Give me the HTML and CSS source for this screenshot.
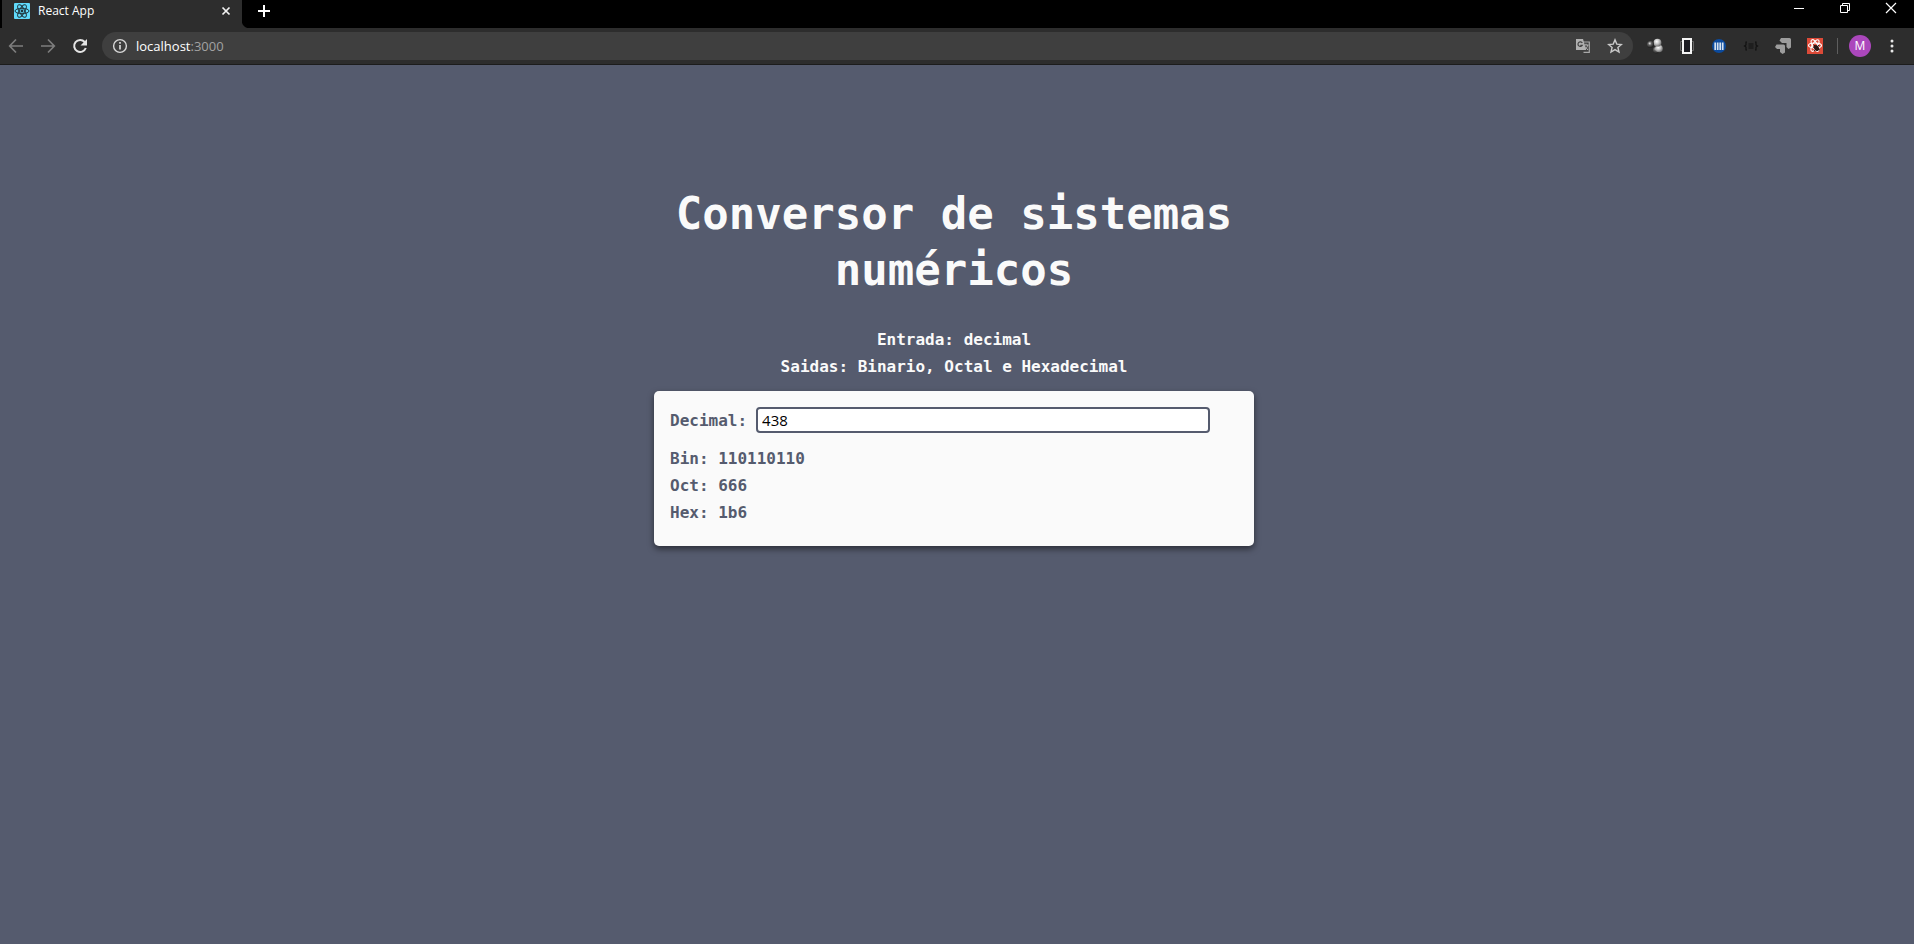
FILE: index.html
```html
<!DOCTYPE html>
<html lang="pt-BR">
<head>
<meta charset="utf-8">
<title>React App</title>
<link rel="stylesheet" href="styles.css">
</head>
<body>
<header class="browser">
  <div class="tabstrip">
    <div class="tab">
      <svg class="favicon" width="16" height="16" viewBox="0 0 16 16" fill="none" stroke="#20353d">
        <rect width="16" height="16" rx="1" fill="#61dafb" stroke="none"/>
        <g stroke-width="1"><ellipse cx="8" cy="8" rx="7" ry="2.7"/><ellipse cx="8" cy="8" rx="7" ry="2.7" transform="rotate(60 8 8)"/><ellipse cx="8" cy="8" rx="7" ry="2.7" transform="rotate(120 8 8)"/></g>
        <circle cx="8" cy="8" r="1.4" fill="#20353d" stroke="none"/>
      </svg>
      <span class="tab-title">React App</span>
      <button class="icon-btn" aria-label="Fechar guia"><svg width="16" height="16" viewBox="0 0 16 16" stroke="#f1f1f1" stroke-width="1.7"><path d="M4.500 4.500l7 7M11.500 4.500l-7 7"/></svg></button>
    </div>
    <button class="icon-btn new-tab" aria-label="Nova guia"><svg width="16" height="16" viewBox="0 0 16 16" stroke="#fff" stroke-width="2"><path d="M8 2v12M2 8h12"/></svg></button>
    <div class="window-controls">
      <button class="icon-btn" aria-label="Minimizar"><svg width="16" height="16" viewBox="0 0 16 16" stroke="#fff"><path d="M3 8.500h10"/></svg></button>
      <button class="icon-btn" aria-label="Restaurar"><svg width="16" height="16" viewBox="0 0 16 16" fill="none" stroke="#fff"><path d="M3.500 5.500h7v7h-7zM5.500 5.500v-2h7v7h-2"/></svg></button>
      <button class="icon-btn" aria-label="Fechar"><svg width="16" height="16" viewBox="0 0 16 16" stroke="#fff" stroke-width="1.2"><path d="M3 3l10 10M13 3L3 13"/></svg></button>
    </div>
  </div>
  <div class="toolbar">
    <nav class="nav-buttons">
      <button class="icon-btn" aria-label="Voltar"><svg width="16" height="16" viewBox="0 0 16 16" fill="none" stroke="#7d7d7d" stroke-width="1.7"><path d="M15 8H2M8 1.500L1.700 8L8 14.500"/></svg></button>
      <button class="icon-btn" aria-label="Avançar"><svg width="16" height="16" viewBox="0 0 16 16" fill="none" stroke="#7d7d7d" stroke-width="1.7"><path d="M1 8h13M8 1.500L14.300 8L8 14.500"/></svg></button>
      <button class="icon-btn" aria-label="Recarregar"><svg width="16" height="16" viewBox="0 0 16 16" fill="none" stroke="#e4e4e4" stroke-width="2"><path d="M12.700 4A6 6 0 1 0 13.800 10"/><path d="M15 1v6.500H8.500z" fill="#e4e4e4" stroke="none"/></svg></button>
    </nav>
    <div class="omnibox">
      <svg width="16" height="16" viewBox="0 0 16 16" fill="none" stroke="#d8d8d8"><circle cx="8" cy="8" r="6.400" stroke-width="1.400"/><path d="M8 7v4.500M8 4v1.700" stroke-width="1.700"/></svg>
      <span class="url">localhost<span class="port">:3000</span></span>
      <button class="icon-btn" aria-label="Traduzir"><svg width="16" height="16" viewBox="0 0 16 16" fill="none"><path d="M6 4h8.300v10.300H8.500" stroke="#a8a8a8" stroke-width="1.200"/><path d="M1 1h7l3.200 11H1z" fill="#b0b0b0"/><path d="M7.300 5A2.300 2.300 0 1 0 7.300 7.300H5.300" stroke="#3f3f3f" stroke-width="1.200"/><path d="M8.500 7h5M11 5.700V7M12.800 7c-.4 2-1.500 3.200-3 4.300M10 8.500l3 3.500" stroke="#b0b0b0"/></svg></button>
      <button class="icon-btn" aria-label="Favoritar"><svg width="16" height="16" viewBox="0 0 16 16" fill="none" stroke="#c9c9c9" stroke-width="1.400"><path d="M8 1.900l1.800 4.200 4.600.4-3.500 3 1.100 4.500L8 11.600 4 14l1.100-4.500-3.500-3 4.600-.4z"/></svg></button>
    </div>
    <div class="extensions">
      <button class="icon-btn" aria-label="Moléculas"><svg width="16" height="16" viewBox="0 0 16 16"><defs><radialGradient id="ball" cx=".4" cy=".35" r=".65"><stop offset="0" stop-color="#fff"/><stop offset=".5" stop-color="#c4c4c4"/><stop offset="1" stop-color="#6e6e6e"/></radialGradient><radialGradient id="dark" cx=".4" cy=".35" r=".6"><stop offset="0" stop-color="#eee"/><stop offset=".4" stop-color="#666"/><stop offset="1" stop-color="#222"/></radialGradient></defs><circle cx="9.500" cy="12" r="3.600" fill="url(#dark)"/><circle cx="12" cy="10.500" r="3.800" fill="url(#ball)"/><circle cx="10.500" cy="4.700" r="3.900" fill="url(#ball)"/><circle cx="3.500" cy="6.500" r="3.500" fill="url(#dark)"/></svg></button>
      <button class="icon-btn" aria-label="Dimensões"><svg width="16" height="16" viewBox="0 0 16 16" fill="none"><path d="M4 3.500H1.500v9H4M12 3.500h2.500v9H12" stroke="#666"/><rect x="4" y="1" width="8" height="14" fill="#1c1c22" stroke="#f4f4f4" stroke-width="2"/></svg></button>
      <button class="icon-btn" aria-label="Colunas"><svg width="16" height="16" viewBox="0 0 16 16"><circle cx="8" cy="8" r="7" fill="#0b4a9d"/><path d="M4.200 4.500v7.500M6.700 4.500v7.500M9.200 4.500v7.500M11.700 4.500v7.500" stroke="#d5e2f0" stroke-width="1.700"/></svg></button>
      <button class="icon-btn" aria-label="JSON"><svg width="16" height="16" viewBox="0 0 16 16" fill="none" stroke="#111" stroke-width="1.200"><path d="M4 4H3v3L1.500 8 3 9v3h1M12 4h1v3l1.500 1L13 9v3h-1M5.500 6h5M5.500 8h5M5.500 10h5"/></svg></button>
      <button class="icon-btn" aria-label="Setas"><svg width="16" height="16" viewBox="0 0 16 16" fill="#9c9c9c"><path d="M6 0h8.500Q16 0 16 1.500V9.500l-2.500 1.500-2-2V5H7L4.500 2.500z"/><path d="M1.500 6.500h7Q10 6.500 10 8v6.500L7.500 16 5 14V11H2L0 9z"/></svg></button>
      <button class="icon-btn" aria-label="React"><svg width="16" height="16" viewBox="0 0 16 16" fill="none"><rect width="16" height="16" fill="#dc4a38"/><g stroke="#fff" stroke-width="1.100"><ellipse cx="8" cy="7.500" rx="6.500" ry="2.500"/><ellipse cx="8" cy="7.500" rx="6.500" ry="2.500" transform="rotate(60 8 7.500)"/><ellipse cx="8" cy="7.500" rx="6.500" ry="2.500" transform="rotate(120 8 7.500)"/></g><ellipse cx="9.500" cy="10" rx="2.300" ry="3.200" fill="#2b1714" transform="rotate(-30 9.500 10)"/><path d="M6 9l7 3M7 13l5-6M6.500 6.500l2 2" stroke="#2b1714"/></svg></button>
    </div>
    <span class="divider"></span>
    <button class="avatar" aria-label="Perfil">M</button>
    <button class="icon-btn" aria-label="Menu"><svg width="16" height="16" viewBox="0 0 16 16" fill="#e8e8e8"><circle cx="8" cy="3" r="1.500"/><circle cx="8" cy="8" r="1.500"/><circle cx="8" cy="13" r="1.500"/></svg></button>
  </div>
</header>
<main class="page">
  <div class="converter">
    <h1 class="title">Conversor de sistemas numéricos</h1>
    <p class="line">Entrada: decimal</p>
    <p class="line">Saidas: Binario, Octal e Hexadecimal</p>
    <section class="card">
      <div class="field">
        <label for="decimal">Decimal:</label>
        <input id="decimal" class="decimal-input" type="text" value="438">
      </div>
      <div class="results">
        <p class="line">Bin: 110110110</p>
        <p class="line">Oct: 666</p>
        <p class="line">Hex: 1b6</p>
      </div>
    </section>
  </div>
</main>
</body>
</html>
```

FILE: styles.css
```css
* { box-sizing: border-box; }

body {
  margin: 0;
  min-height: 100vh;
  display: flex;
  flex-direction: column;
  background: #555b6e;
  font-family: "Open Sans", "Noto Sans", sans-serif;
}

button {
  border: 0;
  padding: 0;
  background: none;
  font-family: inherit;
}

svg { display: block; flex: none; }

.icon-btn { width: 16px; height: 16px; flex: none; }

.browser {
  background: #2d2d2d;
  border-bottom: 1px solid #1c1c1c;
}

.tabstrip {
  display: flex;
  height: 28px;
  padding-left: 2px;
  background: radial-gradient(circle at 8px 0, #000 8px, #2d2d2d 9px) 242px 20px / 8px 8px no-repeat #000;
}

.tab {
  display: flex;
  align-items: center;
  gap: 8px;
  width: 240px;
  padding: 0 8px 6px 12px;
  background: #2d2d2d;
}

.tab-title {
  flex: 1;
  color: #fff;
  font-size: 12px;
  line-height: 16px;
}

.new-tab { margin: 3px 0 0 14px; }

.window-controls {
  display: flex;
  gap: 30px;
  margin-left: auto;
  padding-right: 15px;
}

.toolbar {
  display: flex;
  align-items: center;
  height: 36px;
  padding: 0 14px 0 8px;
}

.nav-buttons { display: flex; gap: 16px; }

.omnibox {
  display: flex;
  align-items: center;
  flex: 1;
  gap: 16px;
  height: 28px;
  margin: 0 14px;
  padding: 0 10px;
  border-radius: 14px;
  background: #3f3f3f;
}

.url {
  flex: 1;
  margin-left: -8px;
  color: #fff;
  font-size: 13px;
}

.port { color: #a2a2a2; }

.extensions { display: flex; gap: 16px; }

.divider {
  width: 1px;
  height: 16px;
  margin: 0 11px 0 14px;
  background: #5e5e5e;
}

.avatar {
  width: 22px;
  height: 22px;
  margin-right: 13px;
  border-radius: 50%;
  background: #ab47bc;
  color: #fff;
  font-size: 12px;
  line-height: 22px;
  text-align: center;
}

.page {
  flex: 1;
  padding: 121px 6px 0 0;
  font-family: "DejaVu Sans Mono", "Liberation Mono", monospace;
  font-weight: bold;
}

.converter {
  width: 100%;
  max-width: 600px;
  margin: 0 auto;
  color: #fafafa;
  text-align: center;
}

.title {
  margin: 0 0 32px;
  font-size: 44px;
  line-height: 56px;
}

.line {
  margin: 0 0 8px;
  font-size: 16px;
  line-height: 19px;
}

.card {
  margin-top: 15px;
  padding: 16px;
  border-radius: 5px;
  background: #fafafa;
  box-shadow: 0 3px 6px rgba(0, 0, 0, 0.5);
  color: #555b6e;
  text-align: left;
}

.field {
  display: flex;
  align-items: center;
  gap: 9px;
  margin-bottom: 16px;
  font-size: 16px;
}

.decimal-input {
  width: 80%;
  height: 26px;
  padding: 0 4px;
  border: 2px solid #555b6e;
  border-radius: 4px;
  outline: none;
  background: #fff;
  color: #000;
  font-family: "Open Sans", "Noto Sans", sans-serif;
  font-size: 15px;
}
```
